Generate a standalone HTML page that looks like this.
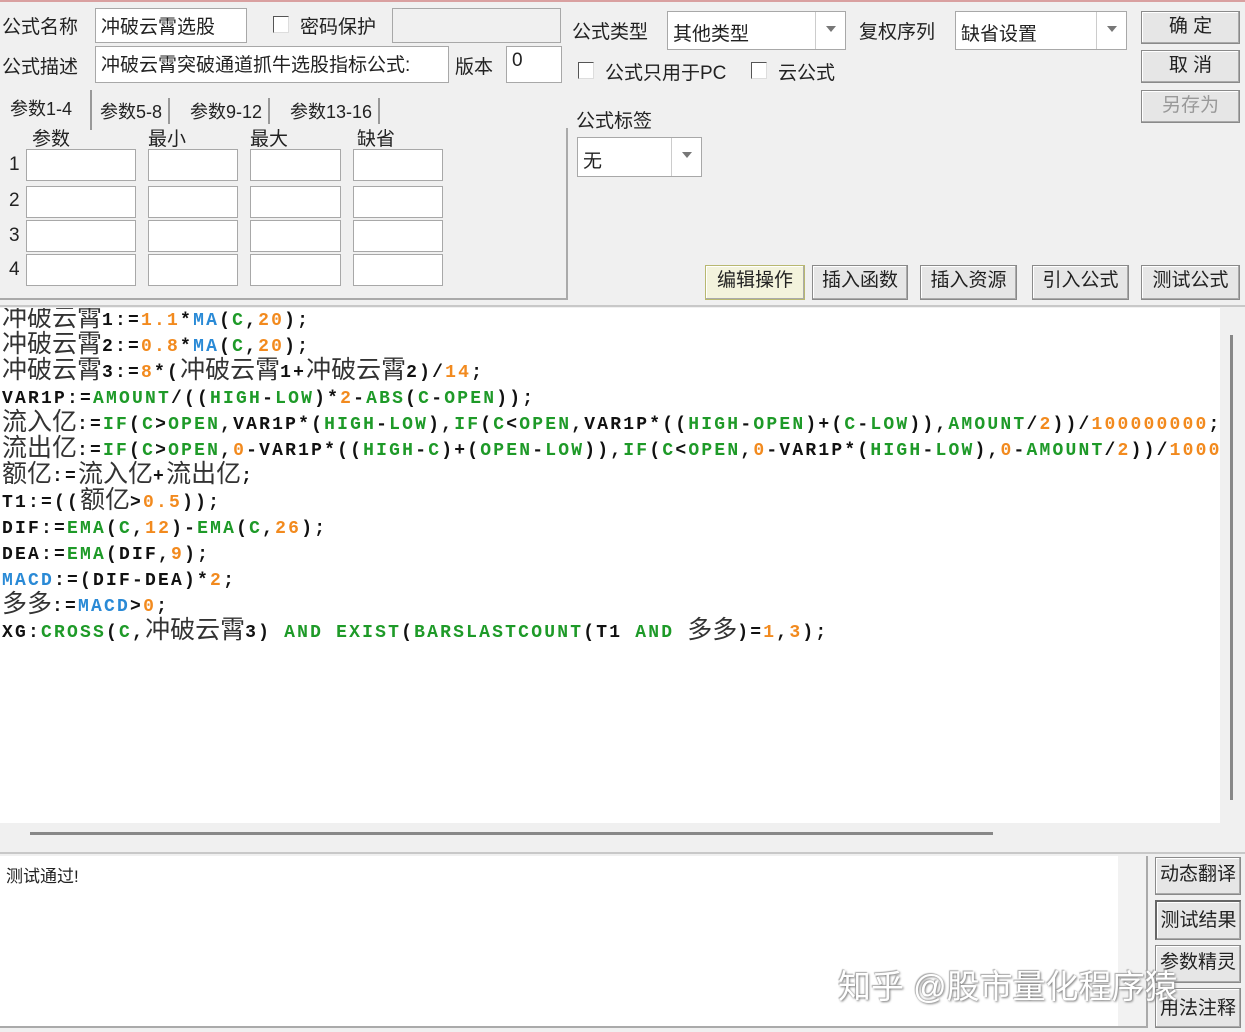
<!DOCTYPE html><html><head><meta charset="utf-8"><style>
*{margin:0;padding:0;box-sizing:border-box}
body{width:1245px;height:1032px;background:#f0f0f0;position:relative;overflow:hidden;font-family:"Liberation Sans","Noto Sans CJK SC",sans-serif;font-size:19px;color:#222}
.a{position:absolute;white-space:nowrap}
.in{position:absolute;background:#fff;border:1px solid #a8a8a8;padding:3px 5px;white-space:nowrap;font-size:19px}
.cb{position:absolute;width:16px;height:17px;background:#fff;border:1px solid #555;border-right-color:#ddd;border-bottom-color:#ddd}
.btn{position:absolute;background:#e6e6e6;border:1px solid #8a8a8a;box-shadow:inset -1px -1px 0 #aaa,inset 1px 1px 0 #fff;text-align:center;font-size:19px;line-height:30px}
.dd{position:absolute;border-left:1px solid #ccc;width:30px;top:0;bottom:0;right:0}
.dd:after{content:"";position:absolute;left:10px;top:14px;border:5px solid transparent;border-top:6px solid #777}
.code{position:absolute;left:0;top:308px;width:1220px;height:515px;background:#fff;overflow:hidden}
.ln{position:absolute;left:2px;height:26px;white-space:nowrap;font-family:"Liberation Mono",monospace;font-weight:bold;font-size:18px;letter-spacing:2.2px;color:#111;line-height:26px}
.c{font-family:"Noto Sans CJK SC",sans-serif;font-weight:normal;font-size:25px;letter-spacing:0;color:#333;line-height:0;vertical-align:-1px}
.g{color:#1e9a28}.o{color:#f28a1e}.b{color:#2a8ad6}
</style></head><body>
<div style="position:absolute;left:0;top:0;width:1245px;height:2px;background:#d9a0a0"></div>
<div class="a" style="left:2px;top:12px">公式名称</div>
<div class="in" style="left:95px;top:8px;width:152px;height:35px">冲破云霄选股</div>
<div class="cb" style="left:273px;top:16px"></div>
<div class="a" style="left:300px;top:12px">密码保护</div>
<div class="in" style="left:392px;top:8px;width:169px;height:35px;background:#f0f0f0"></div>
<div class="a" style="left:2px;top:52px">公式描述</div>
<div class="in" style="left:95px;top:46px;width:354px;height:37px">冲破云霄突破通道抓牛选股指标公式:</div>
<div class="a" style="left:455px;top:52px">版本</div>
<div class="in" style="left:506px;top:46px;width:56px;height:37px">0</div>

<div class="a" style="left:572px;top:17px">公式类型</div>
<div class="in" style="left:667px;top:11px;width:179px;height:39px;padding-top:7px">其他类型<div class="dd"></div></div>
<div class="a" style="left:859px;top:17px">复权序列</div>
<div class="in" style="left:955px;top:11px;width:172px;height:39px;padding-top:7px">缺省设置<div class="dd"></div></div>
<div class="cb" style="left:578px;top:62px"></div>
<div class="a" style="left:605px;top:58px">公式只用于PC</div>
<div class="cb" style="left:751px;top:62px"></div>
<div class="a" style="left:778px;top:58px">云公式</div>
<div class="a" style="left:576px;top:106px">公式标签</div>
<div class="in" style="left:577px;top:137px;width:125px;height:40px;padding-top:8px">无<div class="dd"></div></div>

<div class="btn" style="left:1141px;top:11px;width:99px;height:33px">确 定</div>
<div class="btn" style="left:1141px;top:50px;width:99px;height:33px">取 消</div>
<div class="btn" style="left:1141px;top:90px;width:99px;height:33px;color:#999">另存为</div>

<div style="position:absolute;left:0;top:128px;width:568px;height:172px;border-right:2px solid #aaa;border-bottom:2px solid #aaa"></div>
<div class="a" style="left:0;top:90px;width:92px;height:40px;border-right:2px solid #999;background:#f0f0f0"></div>
<div class="a" style="left:10px;top:95px;font-size:18px">参数1-4</div>
<div class="a" style="left:100px;top:98px;font-size:18px;border-right:2px solid #999;padding-right:6px">参数5-8</div>
<div class="a" style="left:190px;top:98px;font-size:18px;border-right:2px solid #999;padding-right:6px">参数9-12</div>
<div class="a" style="left:290px;top:98px;font-size:18px;border-right:2px solid #999;padding-right:6px">参数13-16</div>
<div class="a" style="left:32px;top:124px">参数</div>
<div class="a" style="left:148px;top:124px">最小</div>
<div class="a" style="left:250px;top:124px">最大</div>
<div class="a" style="left:357px;top:124px">缺省</div>
<div class="a" style="left:9px;top:154px">1</div><div class="a" style="left:9px;top:190px">2</div><div class="a" style="left:9px;top:225px">3</div><div class="a" style="left:9px;top:259px">4</div>
<div class="in" style="left:26px;top:149px;width:110px;height:32px"></div><div class="in" style="left:148px;top:149px;width:90px;height:32px"></div><div class="in" style="left:250px;top:149px;width:91px;height:32px"></div><div class="in" style="left:353px;top:149px;width:90px;height:32px"></div>
<div class="in" style="left:26px;top:186px;width:110px;height:32px"></div><div class="in" style="left:148px;top:186px;width:90px;height:32px"></div><div class="in" style="left:250px;top:186px;width:91px;height:32px"></div><div class="in" style="left:353px;top:186px;width:90px;height:32px"></div>
<div class="in" style="left:26px;top:220px;width:110px;height:32px"></div><div class="in" style="left:148px;top:220px;width:90px;height:32px"></div><div class="in" style="left:250px;top:220px;width:91px;height:32px"></div><div class="in" style="left:353px;top:220px;width:90px;height:32px"></div>
<div class="in" style="left:26px;top:254px;width:110px;height:32px"></div><div class="in" style="left:148px;top:254px;width:90px;height:32px"></div><div class="in" style="left:250px;top:254px;width:91px;height:32px"></div><div class="in" style="left:353px;top:254px;width:90px;height:32px"></div>

<div class="btn" style="left:705px;top:265px;width:100px;height:35px;background:#f3f3dc;border-color:#b8b870">编辑操作</div>
<div class="btn" style="left:812px;top:265px;width:96px;height:35px">插入函数</div>
<div class="btn" style="left:920px;top:265px;width:97px;height:35px">插入资源</div>
<div class="btn" style="left:1032px;top:265px;width:97px;height:35px">引入公式</div>
<div class="btn" style="left:1141px;top:265px;width:99px;height:35px">测试公式</div>
<div style="position:absolute;left:0;top:305px;width:1245px;height:2px;background:#c8c8c8"></div>

<div class="code">
<div class="ln" style="top:0"><span class="c">冲破云霄</span>1:=<span class="o">1.1</span>*<span class="b">MA</span>(<span class="g">C</span>,<span class="o">20</span>);</div>
<div class="ln" style="top:26px"><span class="c">冲破云霄</span>2:=<span class="o">0.8</span>*<span class="b">MA</span>(<span class="g">C</span>,<span class="o">20</span>);</div>
<div class="ln" style="top:52px"><span class="c">冲破云霄</span>3:=<span class="o">8</span>*(<span class="c">冲破云霄</span>1+<span class="c">冲破云霄</span>2)/<span class="o">14</span>;</div>
<div class="ln" style="top:78px">VAR1P:=<span class="g">AMOUNT</span>/((<span class="g">HIGH</span>-<span class="g">LOW</span>)*<span class="o">2</span>-<span class="g">ABS</span>(<span class="g">C</span>-<span class="g">OPEN</span>));</div>
<div class="ln" style="top:104px"><span class="c">流入亿</span>:=<span class="g">IF</span>(<span class="g">C</span>&gt;<span class="g">OPEN</span>,VAR1P*(<span class="g">HIGH</span>-<span class="g">LOW</span>),<span class="g">IF</span>(<span class="g">C</span>&lt;<span class="g">OPEN</span>,VAR1P*((<span class="g">HIGH</span>-<span class="g">OPEN</span>)+(<span class="g">C</span>-<span class="g">LOW</span>)),<span class="g">AMOUNT</span>/<span class="o">2</span>))/<span class="o">100000000</span>;</div>
<div class="ln" style="top:130px"><span class="c">流出亿</span>:=<span class="g">IF</span>(<span class="g">C</span>&gt;<span class="g">OPEN</span>,<span class="o">0</span>-VAR1P*((<span class="g">HIGH</span>-<span class="g">C</span>)+(<span class="g">OPEN</span>-<span class="g">LOW</span>)),<span class="g">IF</span>(<span class="g">C</span>&lt;<span class="g">OPEN</span>,<span class="o">0</span>-VAR1P*(<span class="g">HIGH</span>-<span class="g">LOW</span>),<span class="o">0</span>-<span class="g">AMOUNT</span>/<span class="o">2</span>))/<span class="o">100000000</span>;</div>
<div class="ln" style="top:156px"><span class="c">额亿</span>:=<span class="c">流入亿</span>+<span class="c">流出亿</span>;</div>
<div class="ln" style="top:182px">T1:=((<span class="c">额亿</span>&gt;<span class="o">0.5</span>));</div>
<div class="ln" style="top:208px">DIF:=<span class="g">EMA</span>(<span class="g">C</span>,<span class="o">12</span>)-<span class="g">EMA</span>(<span class="g">C</span>,<span class="o">26</span>);</div>
<div class="ln" style="top:234px">DEA:=<span class="g">EMA</span>(DIF,<span class="o">9</span>);</div>
<div class="ln" style="top:260px"><span class="b">MACD</span>:=(DIF-DEA)*<span class="o">2</span>;</div>
<div class="ln" style="top:286px"><span class="c">多多</span>:=<span class="b">MACD</span>&gt;<span class="o">0</span>;</div>
<div class="ln" style="top:312px">XG:<span class="g">CROSS</span>(<span class="g">C</span>,<span class="c">冲破云霄</span>3) <span class="g">AND</span> <span class="g">EXIST</span>(<span class="g">BARSLASTCOUNT</span>(T1 <span class="g">AND</span> <span class="c">多多</span>)=<span class="o">1</span>,<span class="o">3</span>);</div>
</div>
<div style="position:absolute;left:1230px;top:335px;width:3px;height:465px;background:#888"></div>
<div style="position:absolute;left:30px;top:832px;width:963px;height:3px;background:#888"></div>
<div style="position:absolute;left:0;top:852px;width:1245px;height:2px;background:#c8c8c8"></div>
<div style="position:absolute;left:0;top:856px;width:1148px;height:172px;background:#fff;border-right:2px solid #aaa;border-bottom:2px solid #aaa"></div>
<div style="position:absolute;left:1118px;top:856px;width:28px;height:170px;background:#f2f2f2"></div>
<div class="a" style="left:6px;top:862px;font-size:17px">测试通过!</div>
<div class="btn" style="left:1155px;top:857px;width:86px;height:38px;line-height:34px">动态翻译</div>
<div class="btn" style="left:1155px;top:900px;width:86px;height:40px;line-height:38px;border-left:2px solid #666;border-top:2px solid #666">测试结果</div>
<div class="btn" style="left:1155px;top:945px;width:86px;height:38px;line-height:34px">参数精灵</div>
<div class="btn" style="left:1155px;top:988px;width:86px;height:40px;line-height:40px">用法注释</div>
<div class="a" style="left:838px;top:960px;font-size:33px;color:#fff;text-shadow:1px 1px 2px #777,-1px -1px 1px #aaa">知乎 @股市量化程序猿</div>
</body></html>
